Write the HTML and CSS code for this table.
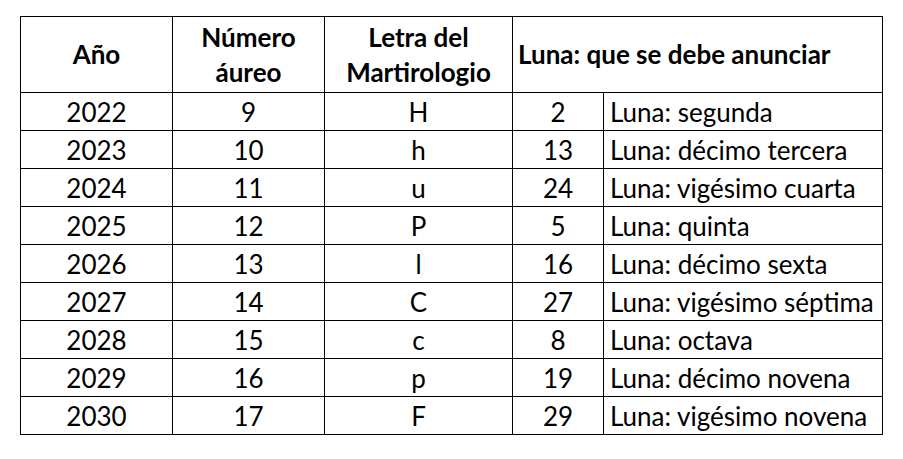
FILE: index.html
```html
<!DOCTYPE html>
<html lang="es">
<head>
<meta charset="utf-8">
<link rel="stylesheet" href="styles.css">
</head>
<body>
<div class="page">
<table class="lunas">
  <colgroup>
    <col class="c-year"><col class="c-num"><col class="c-let"><col class="c-moon"><col class="c-name">
  </colgroup>
  <thead>
    <tr>
      <th>Año</th>
      <th>Número<br>áureo</th>
      <th>Letra del<br>Martirologio</th>
      <th colspan="2" class="left">Luna: que se debe anunciar</th>
    </tr>
  </thead>
  <tbody>
    <tr><td>2022</td><td>9</td><td>H</td><td>2</td><td class="left">Luna: segunda</td></tr>
    <tr><td>2023</td><td>10</td><td>h</td><td>13</td><td class="left">Luna: décimo tercera</td></tr>
    <tr><td>2024</td><td>11</td><td>u</td><td>24</td><td class="left">Luna: vigésimo cuarta</td></tr>
    <tr><td>2025</td><td>12</td><td>P</td><td>5</td><td class="left">Luna: quinta</td></tr>
    <tr><td>2026</td><td>13</td><td>l</td><td>16</td><td class="left">Luna: décimo sexta</td></tr>
    <tr><td>2027</td><td>14</td><td>C</td><td>27</td><td class="left">Luna: vigésimo séptima</td></tr>
    <tr><td>2028</td><td>15</td><td>c</td><td>8</td><td class="left">Luna: octava</td></tr>
    <tr><td>2029</td><td>16</td><td>p</td><td>19</td><td class="left">Luna: décimo novena</td></tr>
    <tr><td>2030</td><td>17</td><td>F</td><td>29</td><td class="left">Luna: vigésimo novena</td></tr>
  </tbody>
</table>
</div>
</body>
</html>
```
FILE: styles.css
```css
html, body {
  margin: 0;
  padding: 0;
  background: #ffffff;
}
.page {
  padding: 16px 0 0 20px;
}
.lunas {
  border-collapse: collapse;
  table-layout: fixed;
  width: 863px;
  font-family: Lato, "Open Sans", sans-serif;
  font-size: 26px;
  color: #000000;
}
.c-year { width: 152px; }
.c-num { width: 152px; }
.c-let { width: 188px; }
.c-moon { width: 91px; }
.c-name { width: 279px; }
.lunas th, .lunas td {
  border: 1px solid #000000;
  padding: 0;
  text-align: center;
  vertical-align: middle;
  white-space: nowrap;
}
.lunas th {
  height: 75px;
  font-weight: 700;
  line-height: 35px;
}
.lunas td {
  height: 37px;
  line-height: 36px;
}
.lunas th.left {
  text-align: left;
  padding-left: 5px;
}
.lunas td.left {
  text-align: left;
  padding-left: 6px;
}
```
